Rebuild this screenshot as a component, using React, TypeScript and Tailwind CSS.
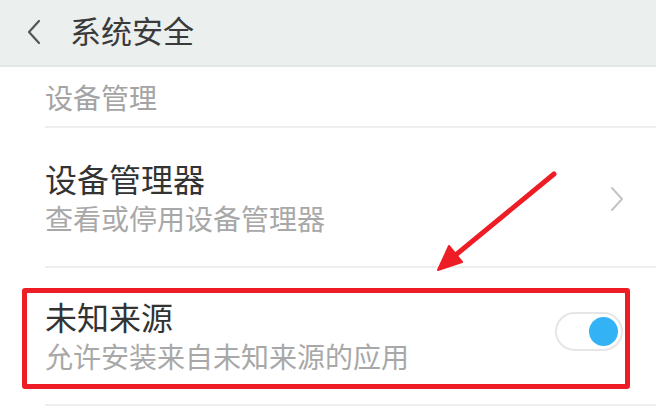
import React from 'react';

const font = { fontFamily: '"Noto Sans CJK SC", "Noto Sans", sans-serif' };

function Toggle({ on }: { on: boolean }) {
  return (
    <div className="w-[68px] h-[39px] rounded-full border-2 border-[#e6e6e6] bg-white flex items-center justify-end px-[3px]">
      {on && <div className="w-[29px] h-[29px] rounded-full bg-[#33b3f6]" />}
    </div>
  );
}

export default function App() {
  return (
    <div className="relative w-[656px] h-[411px] overflow-hidden bg-white" style={font}>
      {/* top bar */}
      <div className="h-[67px] bg-[#ebefee] border-b-2 border-[#e2e6e5] flex items-center">
        <svg className="ml-[26px] mt-[-2px]" width="16" height="26" viewBox="0 0 16 26" fill="none">
          <path d="M13 2 L3 13 L13 24" stroke="#555" strokeWidth="2.2" strokeLinecap="round" strokeLinejoin="round" />
        </svg>
        <span className="ml-[28px] text-[31px] leading-[40px] text-[#3a3a3a] mt-[-6px]">系统安全</span>
      </div>

      {/* section label */}
      <div className="pl-[45px]">
        <div className="h-[61px] flex items-center border-b-2 border-[#eeeeee]">
          <span className="text-[28px] leading-[40px] text-[#a4a4a4]">设备管理</span>
        </div>

        {/* device admin */}
        <div className="h-[140px] flex items-center border-b-2 border-[#eeeeee] pr-[32px]">
          <div className="flex-1 flex flex-col pt-[2px]">
            <span className="text-[32px] leading-[40px] text-[#333333]">设备管理器</span>
            <span className="text-[28px] leading-[40px] text-[#a8a8a8]">查看或停用设备管理器</span>
          </div>
          <svg width="14" height="24" viewBox="0 0 14 24" fill="none" className="mt-[4px]">
            <path d="M2 1 L12 12 L2 23" stroke="#c4c4c4" strokeWidth="2" strokeLinecap="round" strokeLinejoin="round" />
          </svg>
        </div>

        {/* unknown sources */}
        <div className="h-[138px] flex items-center border-b-2 border-[#eeeeee] pr-[33px]">
          <div className="flex-1 flex flex-col">
            <span className="text-[32px] leading-[40px] text-[#333333]">未知来源</span>
            <span className="text-[28px] leading-[40px] text-[#a8a8a8]">允许安装来自未知来源的应用</span>
          </div>
          <div className="mt-[-10px]">
            <Toggle on />
          </div>
        </div>
      </div>

      {/* annotation: red highlight box */}
      <div className="absolute left-[22px] top-[288px] w-[608px] h-[101px] border-[5px] border-[#ee1d25] rounded-[3px]" />

      {/* annotation: arrow */}
      <svg className="absolute left-0 top-0" width="656" height="411" viewBox="0 0 656 411" fill="none">
        <path d="M554 174 L452 258" stroke="#ee1d25" strokeWidth="5" strokeLinecap="round" />
        <path d="M438 270 L449 246 L462 262 Z" fill="#ee1d25" stroke="#ee1d25" strokeWidth="2" strokeLinejoin="round" />
      </svg>
    </div>
  );
}
